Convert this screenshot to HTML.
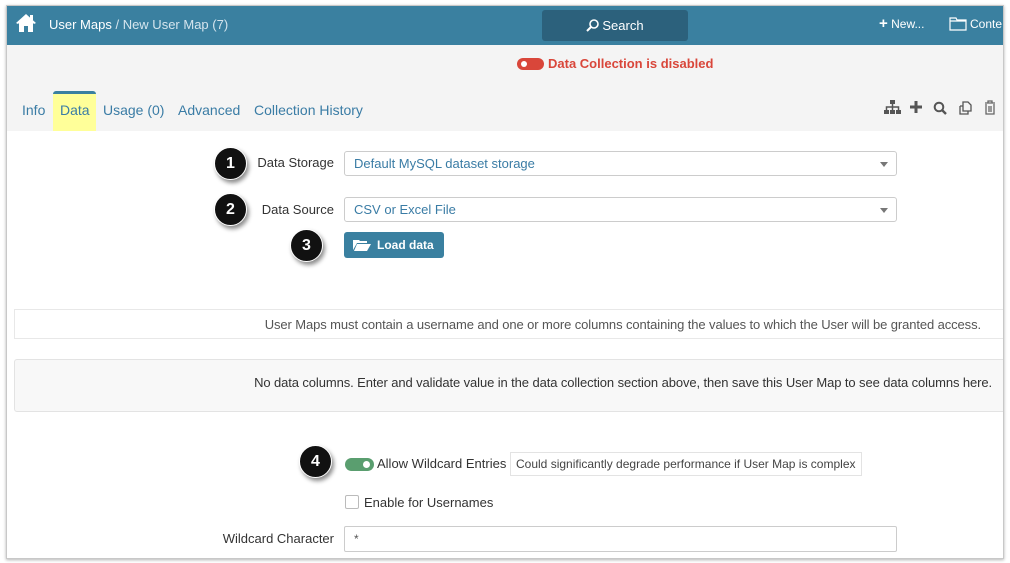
<!DOCTYPE html>
<html><head><style>
*{box-sizing:border-box;margin:0;padding:0}
body{width:1010px;height:563px;background:#fff;position:relative;overflow:hidden;font-family:"Liberation Sans",Arial,sans-serif;font-size:13px;color:#333}
.a{position:absolute}
.frame{left:6px;top:5px;width:998px;height:554px;border:1px solid #c8c8c8;box-shadow:0 1px 3px rgba(0,0,0,.3);overflow:hidden;background:#fff}
.circ{width:33px;height:33px;border-radius:50%;background:#111;color:#fff;font-size:16px;font-weight:bold;text-align:center;line-height:31px;box-shadow:2px 3px 4px rgba(0,0,0,.45);border:1px solid #fff}
.sel{height:25px;border:1px solid #ccc;border-radius:3px;color:#3a7ca5;padding-left:9px;line-height:23px;background:#fff}
.sel:after{content:"";position:absolute;right:8px;top:10px;border:4px solid transparent;border-top:5px solid #777}
.lbl{font-size:13px;color:#333;text-align:right}
</style></head><body>
<div class="a frame">
 <div class="a" style="left:0;top:0;width:998px;height:39px;background:#3a80a0"></div>
 <svg class="a" style="left:8px;top:7px" width="22" height="20" viewBox="0 0 22 20"><path d="M11 1 L1 10 L3 11 L4 10 V19 H9 V13 H13 V19 H18 V10 L19 11 L21 10 Z" fill="#fff"/><rect x="15" y="2" width="3" height="5" fill="#fff"/></svg>
 <div class="a" style="left:42px;top:11px;color:#fff;font-size:13px">User Maps <span style="color:#d5e5ee">/ New User Map (7)</span></div>
 <div class="a" style="left:535px;top:4px;width:146px;height:31px;background:#2c617c;border-radius:3px;color:#fff;font-size:13px;text-align:center;line-height:31px">
  <svg width="13" height="13" viewBox="0 0 13 13" style="vertical-align:-2px;margin-right:3px"><circle cx="8" cy="5" r="4" fill="none" stroke="#fff" stroke-width="1.6"/><path d="M5 8 L1 12" stroke="#fff" stroke-width="2"/></svg>Search</div>
 <div class="a" style="left:872px;top:11px;color:#fff;font-size:12px"><b style="font-size:15px;line-height:12px">+</b> New...</div>
 <svg class="a" style="left:942px;top:11px" width="18" height="14" viewBox="0 0 18 14"><path d="M1 1 H7 L8 3 H17 V13 H1 Z M1 4 H17" fill="none" stroke="#fff" stroke-width="1.2"/></svg>
 <div class="a" style="left:963px;top:11px;color:#fff;font-size:12px">Conte</div>
 <div class="a" style="left:0;top:39px;width:998px;height:86px;background:#f4f4f4"></div>
 <div class="a" style="left:510px;top:52px;width:27px;height:12px;border-radius:6px;background:#d9463a"><div class="a" style="left:4px;top:3px;width:6px;height:6px;border-radius:50%;background:#fff"></div></div>
 <div class="a" style="left:541px;top:50px;color:#d9463a;font-weight:bold;font-size:13px">Data Collection is disabled</div>
 <div class="a" style="left:46px;top:85px;width:43px;height:40px;background:#ffff99;border-top:3px solid #3a80a0;border-radius:3px 3px 0 0"></div>
 <div class="a" style="left:15px;top:96px;font-size:14px;color:#3a7ca5">Info</div>
 <div class="a" style="left:53px;top:96px;font-size:14px;color:#3a7ca5">Data</div>
 <div class="a" style="left:96px;top:96px;font-size:14px;color:#3a7ca5">Usage (0)</div>
 <div class="a" style="left:171px;top:96px;font-size:14px;color:#3a7ca5">Advanced</div>
 <div class="a" style="left:247px;top:96px;font-size:14px;color:#3a7ca5">Collection History</div>
 <svg class="a" style="left:877px;top:94px" width="17" height="15" viewBox="0 0 17 15"><rect x="6" y="0" width="5" height="4" fill="#555"/><path d="M8.5 4 V7 M2.5 10 V7 H14.5 V10 M8.5 7 V10" stroke="#555" stroke-width="1.5" fill="none"/><rect x="0" y="10" width="5" height="4" fill="#555"/><rect x="6" y="10" width="5" height="4" fill="#555"/><rect x="12" y="10" width="5" height="4" fill="#555"/></svg>
 <svg class="a" style="left:902px;top:94px" width="14" height="14" viewBox="0 0 14 14"><path d="M7 1 V13 M1 7 H13" stroke="#555" stroke-width="3"/></svg>
 <svg class="a" style="left:926px;top:95px" width="14" height="14" viewBox="0 0 14 14"><circle cx="6" cy="6" r="4.3" fill="none" stroke="#555" stroke-width="2"/><path d="M9 9 L13 13" stroke="#555" stroke-width="2.4"/></svg>
 <svg class="a" style="left:951px;top:94px" width="16" height="16" viewBox="0 0 16 16"><path d="M5 2 H10 L13 5 V11 H5 Z M2 6 H5 M2 6 V14 H10 V11" fill="none" stroke="#555" stroke-width="1.3"/></svg>
 <svg class="a" style="left:977px;top:94px" width="12" height="15" viewBox="0 0 12 15"><path d="M1 3 H11 M4 3 V1 H8 V3 M2 4 V14 H10 V4 M5 6 V12 M7 6 V12" fill="none" stroke="#666" stroke-width="1.3"/></svg>

 <div class="a circ" style="left:207px;top:141px">1</div>
 <div class="a lbl" style="left:219px;top:149px;width:108px">Data Storage</div>
 <div class="a sel" style="left:337px;top:145px;width:553px">Default MySQL dataset storage</div>
 <div class="a circ" style="left:207px;top:187px">2</div>
 <div class="a lbl" style="left:219px;top:196px;width:108px">Data Source</div>
 <div class="a sel" style="left:337px;top:191px;width:553px">CSV or Excel File</div>
 <div class="a circ" style="left:283px;top:223px">3</div>
 <div class="a" style="left:337px;top:226px;width:100px;height:26px;background:#3a80a0;border-radius:3px;color:#fff;font-weight:bold;font-size:12px;line-height:26px;padding-left:33px">Load data
  <svg class="a" style="left:9px;top:7px" width="18" height="12" viewBox="0 0 18 12"><path d="M0 1 H6 L7 2 H14 V4 H4 L0 11 Z M4 5 H18 L14 12 H1 Z" fill="#fff"/></svg></div>

 <div class="a" style="left:7px;top:303px;width:992px;height:30px;border:1px solid #e8e8e8;background:#fff;text-align:right;padding-right:24px;line-height:30px;font-size:13px;color:#555;letter-spacing:-0.1px">User Maps must contain a username and one or more columns containing the values to which the User will be granted access.</div>
 <div class="a" style="left:7px;top:353px;width:992px;height:53px;border:1px solid #e3e3e3;border-radius:3px;background:#f8f8f8;text-align:right;padding-right:13px;line-height:45px;font-size:13px;color:#333;letter-spacing:-0.1px">No data columns. Enter and validate value in the data collection section above, then save this User Map to see data columns here.</div>

 <div class="a circ" style="left:292px;top:439px">4</div>
 <div class="a" style="left:338px;top:452px;width:29px;height:13px;border-radius:7px;background:#5a9e6f"><div class="a" style="left:18px;top:3px;width:7px;height:7px;border-radius:50%;background:#fff"></div></div>
 <div class="a" style="left:370px;top:450px;color:#333">Allow Wildcard Entries</div>
 <div class="a" style="left:503px;top:446px;width:352px;height:24px;border:1px solid #e3e3e3;font-size:12px;line-height:22px;padding-left:5px;color:#444">Could significantly degrade performance if User Map is complex</div>
 <div class="a" style="left:338px;top:489px;width:14px;height:14px;border:1px solid #bbb;border-radius:2px;background:#fff"></div>
 <div class="a" style="left:357px;top:489px;color:#333">Enable for Usernames</div>
 <div class="a lbl" style="left:179px;top:525px;width:148px">Wildcard Character</div>
 <div class="a" style="left:337px;top:520px;width:553px;height:26px;border:1px solid #ccc;border-radius:2px;padding-left:9px;line-height:24px;color:#555;font-size:12px">*</div>
</div>
</body></html>
